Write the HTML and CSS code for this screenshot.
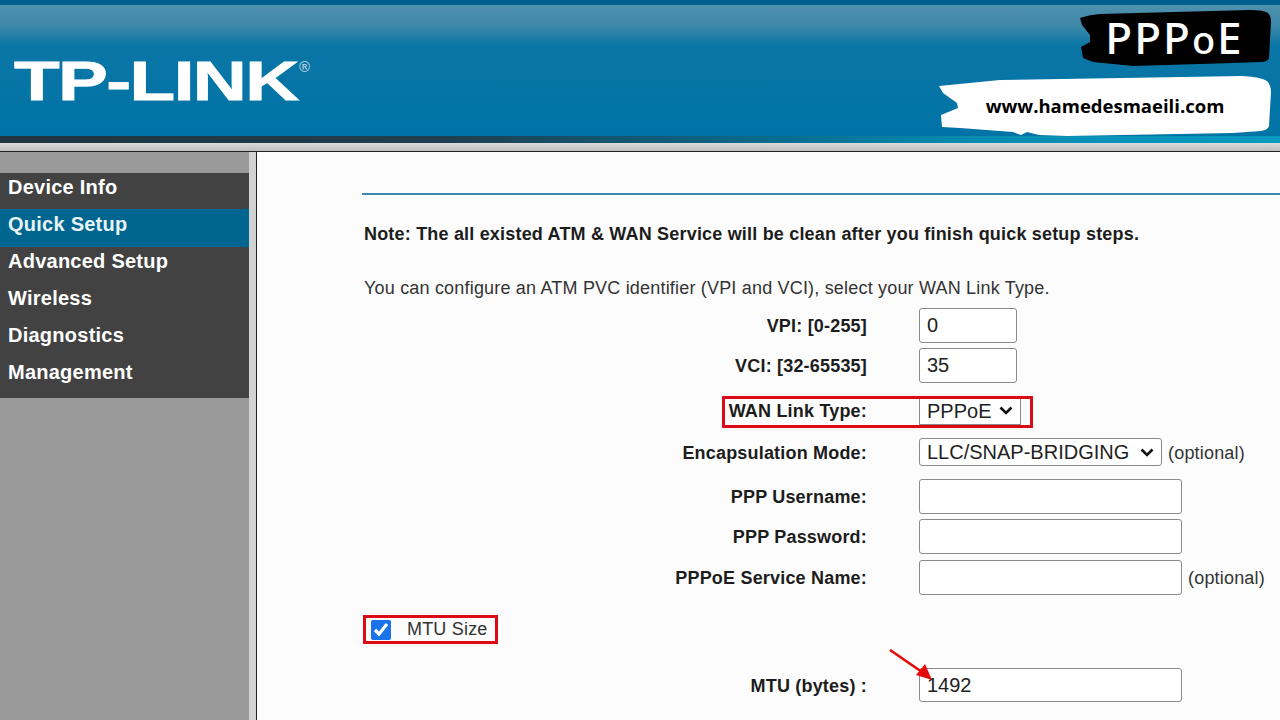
FILE: index.html
```html
<!DOCTYPE html>
<html lang="en">

<head>
    <meta charset="UTF-8" />
    <meta name="viewport" content="width=device-width, initial-scale=1.0" />
    <title>TP-LINK Quick Setup</title>
    <link rel="stylesheet" href="styles.css">
</head>

<body>
    <header class="banner">
        <div class="logo"><span class="logo-text">TP-LINK</span></div>
        <span class="logo-reg">®</span>

        <div class="brush brush-dark">
            <svg viewBox="0 0 191 56" preserveAspectRatio="none">
                <path fill="#000" d="M0 8 Q8 5 20 4 L170 0 Q184 0 188 3 Q191 6 191 12 L189 48 Q188 52 180 52 L153 53 L53 56 L13 52 L3 48 L1 37 L10 32 L10 25 L2 15 Z" />
            </svg>
            <span class="brush-title">PPP<span class="small-o">o</span>E</span>
        </div>

        <div class="brush brush-light">
            <svg viewBox="0 0 332 60" preserveAspectRatio="none">
                <path fill="#fff" d="M0 10 L61 4 L304 0 Q322 1 328 5 Q332 9 332 16 L330 50 Q329 54 322 55 L294 57 L128 60 L100 59 L88 56 L82 59 L74 56 L21 52 L3 51 L2 39 L19 32 L18 27 L4 17 Z" />
            </svg>
            <span class="brush-url">www.hamedesmaeili.com</span>
        </div>
    </header>

    <div class="page">
        <nav class="sidebar">
            <ul class="menu">
                <li>Device Info</li>
                <li class="active">Quick Setup</li>
                <li>Advanced Setup</li>
                <li>Wireless</li>
                <li>Diagnostics</li>
                <li>Management</li>
            </ul>
        </nav>

        <main class="content">
            <hr class="rule">
            <p class="note">Note: The all existed ATM &amp; WAN Service will be clean after you finish quick setup steps.</p>
            <p class="intro">You can configure an ATM PVC identifier (VPI and VCI), select your WAN Link Type.</p>

            <div class="form">
                <div class="field">
                    <label>VPI: [0-255]</label>
                    <input class="input-short" type="text" value="0">
                </div>
                <div class="field gap-sm">
                    <label>VCI: [32-65535]</label>
                    <input class="input-short" type="text" value="35">
                </div>
                <div class="field gap-lg">
                    <label>WAN Link Type:</label>
                    <select class="select-wan">
                        <option>PPPoE</option>
                    </select>
                </div>
                <div class="field gap-lg">
                    <label>Encapsulation Mode:</label>
                    <select class="select-encap">
                        <option>LLC/SNAP-BRIDGING</option>
                    </select>
                    <span class="optional">(optional)</span>
                </div>
                <div class="field gap-lg">
                    <label>PPP Username:</label>
                    <input class="input-long" type="text">
                </div>
                <div class="field gap-sm">
                    <label>PPP Password:</label>
                    <input class="input-long" type="password">
                </div>
                <div class="field gap-md">
                    <label>PPPoE Service Name:</label>
                    <input class="input-long" type="text">
                    <span class="optional">(optional)</span>
                </div>

                <label class="mtu-check">
                    <input type="checkbox" checked>
                    <span>MTU Size</span>
                </label>

                <div class="field field-mtu">
                    <label>MTU (bytes) :</label>
                    <input class="input-long" type="text" value="1492">
                </div>
            </div>
        </main>
    </div>

    <!-- marcacoes por cima do print -->
    <div class="mark-wan"></div>
    <svg class="arrow" viewBox="0 0 46 34">
        <line x1="1" y1="1" x2="33" y2="23" stroke="#e40a0a" stroke-width="2.6" />
        <polygon fill="#e40a0a" points="43,31 27,26 36,15" />
    </svg>
</body>

</html>
```

FILE: styles.css
```css
* {
    box-sizing: border-box;
}

html,
body {
    height: 720px;
    overflow: hidden;
}

body {
    margin: 0;
    font-family: "Liberation Sans", Arial, sans-serif;
    font-size: 18px;
    letter-spacing: 0.19px;
    color: #1c1c1c;
    background: #fcfcfc;
    position: relative;
}

/* Faixa azul do topo */
.banner {
    height: 152px;
    position: relative;
    border-bottom: 1px solid #222;
    padding: 62px 0 0 14px;
    background:
        linear-gradient(#005f8c 0, #005f8c 5px, transparent 5px),
        linear-gradient(to bottom,
            #4f90ae 5px,
            #3f88a9 25px,
            #0a76a6 46px,
            #0073a6 136px,
            transparent 136px),
        linear-gradient(to right, #1f3540 0, #1f3f50 35%, #0a6a8c 60%, #0a8ab0 75%, #0a9ac0 100%) 0 136px / 100% 7px no-repeat,
        linear-gradient(#dcdcdc 143px, #bdbdbd 151px);
}

.logo {
    display: flex;
    align-items: flex-start;
}

.logo-text {
    display: block;
    font-size: 55px;
    font-weight: bold;
    line-height: 38px;
    color: #fff;
    letter-spacing: -1.2px;
    -webkit-text-stroke: 0.8px #fff;
    transform: scaleX(1.36);
    transform-origin: left top;
}

.logo-reg {
    position: absolute;
    left: 299px;
    top: 59px;
    font-size: 15px;
    font-weight: bold;
    line-height: 15px;
    letter-spacing: 0;
    color: #a9cbdc;
}

.brush {
    position: absolute;
    display: flex;
    align-items: center;
    justify-content: center;
}

.brush svg {
    position: absolute;
    left: 0;
    top: 0;
    width: 100%;
    height: 100%;
}

.brush > span {
    position: relative;
}

.brush-dark {
    left: 1080px;
    top: 10px;
    width: 191px;
    height: 56px;
}

.brush-light {
    left: 939px;
    top: 76px;
    width: 332px;
    height: 60px;
}

.brush-title {
    left: -1px;
    font-family: "Noto Sans", sans-serif;
    font-size: 44px;
    font-weight: 500;
    line-height: 56px;
    color: #fff;
    letter-spacing: 2px;
}

.small-o {
    font-size: 38px;
}

.brush-url {
    font-family: "Open Sans", sans-serif;
    font-size: 18.5px;
    font-weight: bold;
    letter-spacing: 0;
    color: #000;
    left: 0;
    top: -1px;
}

/* Menu lateral */
.page {
    display: flex;
    height: 568px;
}

.sidebar {
    width: 257px;
    flex-shrink: 0;
    padding: 21px 7px 0 0;
    background: #999;
    border-right: 1px solid #222;
    box-shadow: inset -7px 0 0 #d2d2d2;
}

.menu {
    list-style: none;
    margin: 0;
    padding: 0;
    background: #424242;
}

.menu li {
    height: 37px;
    line-height: 28px;
    padding-left: 8px;
    font-size: 20px;
    font-weight: bold;
    letter-spacing: 0.25px;
    color: #fff;
}

.menu li:first-child {
    height: 36px;
}

.menu li:last-child {
    height: 40px;
}

.menu li.active {
    height: 38px;
    line-height: 30px;
    background: #006690;
    color: #e8f4f8;
}

/* Formulario */
.content {
    flex: 1;
    padding: 41px 0 0 107px;
    background: #fcfcfc;
}

.rule {
    height: 2px;
    margin: 0 0 27px -2px;
    border: 0;
    background: #3f86ab;
}

.note {
    margin: 0 0 30px;
    font-weight: bold;
    line-height: 24px;
}

.intro {
    margin: 0;
    line-height: 24px;
    color: #333;
}

.form {
    display: flex;
    flex-direction: column;
    margin-top: 8px;
}

.field {
    display: flex;
    align-items: center;
}

.gap-sm {
    margin-top: 5px;
}

.gap-md {
    margin-top: 6px;
}

.gap-lg {
    margin-top: 13px;
}

.field label {
    width: 503px;
    margin-right: 52px;
    padding-top: 2px;
    text-align: right;
    font-weight: bold;
}

.field input,
.field select {
    height: 35px;
    padding: 0 7px;
    font-family: "Liberation Sans", Arial, sans-serif;
    font-size: 20px;
    color: #222;
    background-color: #fff;
    border: 1.5px solid #8a8a8a;
    border-radius: 3px;
}

.input-short {
    width: 98px;
}

.input-long {
    width: 263px;
}

.optional {
    margin-left: 6px;
    padding-top: 2px;
    color: #333;
}

.field select {
    appearance: none;
    background-image: url("data:image/svg+xml,%3Csvg xmlns='http://www.w3.org/2000/svg' viewBox='0 0 14 9'%3E%3Cpath d='M1.5 1.5 7 7l5.500-5.500' fill='none' stroke='%23111' stroke-width='2.600'/%3E%3C/svg%3E");
    background-repeat: no-repeat;
    background-size: 14px 9px;
    background-position: right 7px center;
}

.field .select-wan {
    width: 102px;
    height: 29px;
    border-radius: 0;
}

.field .select-encap {
    width: 243px;
    height: 28px;
}

.mtu-check {
    width: 135px;
    height: 29px;
    margin: 20px 0 0 -1px;
    display: flex;
    align-items: center;
    gap: 16px;
    padding-left: 5px;
    border: 3px solid #dc0a14;
    color: #333;
}

.mtu-check input {
    width: 20px;
    height: 20px;
    margin: 0;
    accent-color: #1a73e8;
}

.field-mtu {
    margin-top: 24px;
}

.field-mtu .input-long {
    height: 34px;
}

/* Marcacoes vermelhas */
.mark-wan {
    position: absolute;
    left: 722px;
    top: 396px;
    width: 311px;
    height: 32px;
    border: 3px solid #dc0a14;
}

.arrow {
    position: absolute;
    left: 889px;
    top: 649px;
    width: 46px;
    height: 34px;
}
```
